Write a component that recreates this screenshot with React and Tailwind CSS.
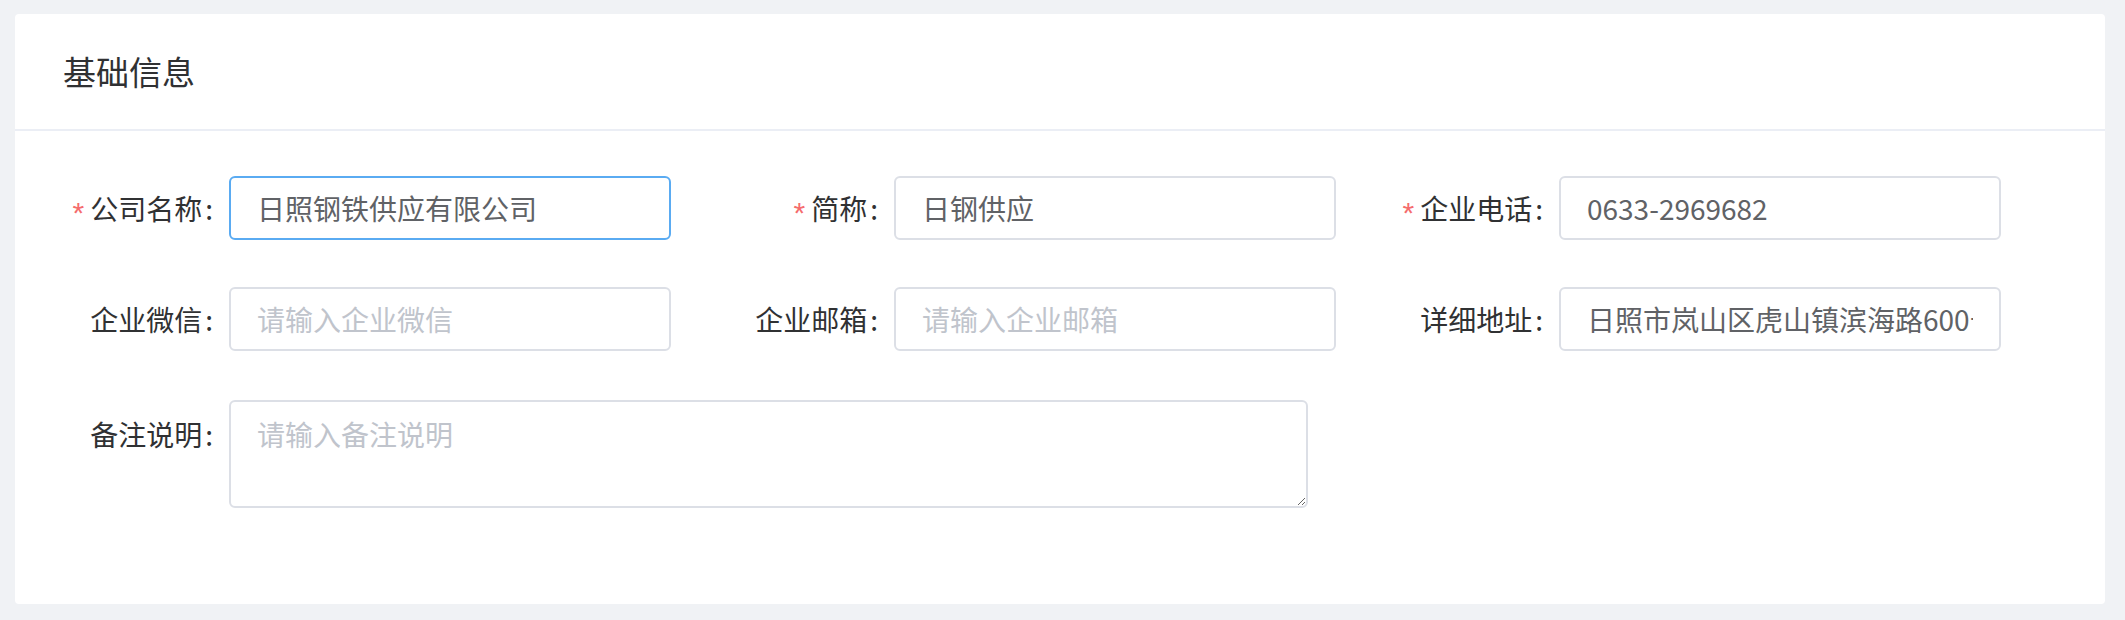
import React from "react";

function Field({ label, required, value, placeholder, focused }) {
  return (
    <div className="flex w-[665px] items-center">
      <label className="flex w-[160px] shrink-0 items-center justify-end pr-[16px] text-[28px] leading-none text-[#303133]">
        {required && (
          <span className="mr-[6px] translate-y-[5px] font-['Liberation_Sans',sans-serif] text-[30px] text-[#f56c6c]">
            *
          </span>
        )}
        <span>{label}</span>
        <span className="ml-[3px]">:</span>
      </label>
      <input
        readOnly
        value={value || ""}
        placeholder={placeholder}
        className={
          "h-[64px] w-[442px] rounded-[6px] border-2 bg-white px-[26px] text-[28px] text-[#606266] outline-none placeholder:text-[#c0c4cc] " +
          (focused ? "border-[#5aabf2]" : "border-[#dcdfe6]")
        }
      />
    </div>
  );
}

export default function App() {
  return (
    <div className="h-[620px] overflow-hidden bg-[#f0f2f5] pt-[14px] pl-[15px] pr-[20px] font-['Noto_Sans_CJK_SC','Noto_Sans',sans-serif]">
      <div className="rounded-[4px] bg-white">
        <div className="flex h-[117px] items-center border-b-2 border-[#ebeef5] pl-[48px] text-[33px] text-[#303133]">
          基础信息
        </div>
        <div className="pl-[54px] pt-[45px] pb-[96px]">
          <div className="flex">
            <Field label="公司名称" required value="日照钢铁供应有限公司" focused />
            <Field label="简称" required value="日钢供应" />
            <Field label="企业电话" required value="0633-2969682" />
          </div>
          <div className="mt-[47px] flex">
            <Field label="企业微信" placeholder="请输入企业微信" />
            <Field label="企业邮箱" placeholder="请输入企业邮箱" />
            <Field label="详细地址" value="日照市岚山区虎山镇滨海路600号" />
          </div>
          <div className="mt-[49px] flex items-start">
            <label className="flex h-[68px] w-[160px] shrink-0 items-center justify-end pr-[16px] text-[28px] leading-none text-[#303133]">
              <span>备注说明</span>
              <span className="ml-[3px]">:</span>
            </label>
            <textarea
              readOnly
              placeholder="请输入备注说明"
              className="block h-[108px] w-[1079px] rounded-[6px] border-2 border-[#dcdfe6] bg-white px-[26px] py-[12px] text-[28px] leading-[40px] text-[#606266] outline-none placeholder:text-[#c0c4cc]"
            />
          </div>
        </div>
      </div>
    </div>
  );
}
